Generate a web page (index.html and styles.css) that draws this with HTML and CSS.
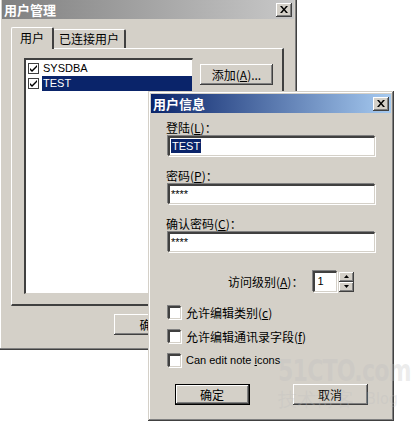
FILE: index.html
```html
<!DOCTYPE html>
<html>
<head>
<meta charset="UTF-8">
<link rel="stylesheet" href="styles.css">
</head>
<body>
<div class="desk">

  <div class="win back">
    <div class="title inactive">
      <span class="cap">用户管理</span>
      <span class="xbtn"><svg width="8" height="7" viewBox="0 0 8 7"><path d="M0 0h2l2 2.5 2-2.5h2l-3 3.5 3 3.5h-2l-2-2.5-2 2.5h-2l3-3.5z" fill="#000"/></svg></span>
    </div>
    <div class="tabs">
      <span class="tab on">用户</span>
      <span class="tab">已连接用户</span>
    </div>
    <div class="panel">
      <div class="list">
        <div class="item">
          <span class="chk"><svg width="9" height="9" viewBox="0 0 9 9"><path d="M1 4l2 2 5-5v2l-5 5-2-2z" fill="#000"/></svg></span>
          <span class="txt">SYSDBA</span>
        </div>
        <div class="item">
          <span class="chk"><svg width="9" height="9" viewBox="0 0 9 9"><path d="M1 4l2 2 5-5v2l-5 5-2-2z" fill="#000"/></svg></span>
          <span class="txt sel">TEST</span>
        </div>
      </div>
      <button class="btn add">添加(<u>A</u>)...</button>
    </div>
    <div class="foot">
      <button class="btn">确定</button>
    </div>
  </div>

  <div class="win front">
    <div class="title active">
      <span class="cap">用户信息</span>
      <span class="xbtn"><svg width="8" height="7" viewBox="0 0 8 7"><path d="M0 0h2l2 2.5 2-2.5h2l-3 3.5 3 3.5h-2l-2-2.5-2 2.5h-2l3-3.5z" fill="#000"/></svg></span>
    </div>
    <div class="body">
      <label class="lbl">登陆(<u>L</u>)：</label>
      <div class="field"><span class="sel">TEST</span></div>

      <label class="lbl">密码(<u>P</u>)：</label>
      <div class="field">****</div>

      <label class="lbl">确认密码(<u>C</u>)：</label>
      <div class="field">****</div>

      <div class="level">
        <span>访问级别(<u>A</u>)：</span>
        <div class="spin">1</div>
        <div class="arrows">
          <span class="arr"><svg width="5" height="3" viewBox="0 0 5 3"><path d="M2.5 0L5 3H0z" fill="#000"/></svg></span>
          <span class="arr"><svg width="5" height="3" viewBox="0 0 5 3"><path d="M0 0h5L2.5 3z" fill="#000"/></svg></span>
        </div>
      </div>

      <div class="opts">
        <div class="opt"><span class="box"></span><span>允许编辑类别(<u>c</u>)</span></div>
        <div class="opt"><span class="box"></span><span>允许编辑通讯录字段(<u>f</u>)</span></div>
        <div class="opt"><span class="box"></span><span class="lat">Can edit note <u>i</u>cons</span></div>
      </div>

      <div class="btns">
        <button class="btn def">确定</button>
        <button class="btn">取消</button>
      </div>
    </div>
  </div>

  <div class="mark">
    <div class="mark-big">51CTO.com</div>
    <div class="mark-small"><span>技术博客</span><span class="blog">Blog</span></div>
  </div>
</div>
</body>
</html>
```

FILE: styles.css
```css
html, body {
    margin: 0;
    padding: 0;
    background: #fff;
}

body {
    font-family: "Noto Sans CJK SC", "Liberation Sans", sans-serif;
    font-size: 12px;
    color: #000;
}

.desk {
    position: relative;
    width: 414px;
    height: 428px;
    overflow: hidden;
}

/* windows */
.win {
    position: absolute;
    box-sizing: border-box;
    background: #d4d0c8;
    padding: 3px;
    box-shadow: inset -1px -1px #404040, inset 1px 1px #d4d0c8,
                inset -2px -2px #808080, inset 2px 2px #fff;
    display: flex;
    flex-direction: column;
}

.back {
    left: -1px;
    top: -3px;
    width: 298px;
    height: 353px;
}

.front {
    left: 148px;
    top: 91px;
    width: 246px;
    height: 330px;
}

.title {
    height: 19px;
    flex-shrink: 0;
    display: flex;
    align-items: center;
    justify-content: space-between;
    padding: 0 2px 0 2px;
    color: #fff;
    font-weight: bold;
    font-size: 13px;
}

.title.inactive {
    background: linear-gradient(to right, #808080, #c8c8c8);
}

.title.active {
    background: linear-gradient(to right, #0a246a, #a6caf0);
}

.xbtn {
    width: 16px;
    height: 14px;
    background: #d4d0c8;
    box-sizing: border-box;
    display: flex;
    align-items: center;
    justify-content: center;
    box-shadow: inset -1px -1px #404040, inset 1px 1px #fff,
                inset -2px -2px #808080;
}

/* tabs */
.tabs {
    display: flex;
    align-items: flex-end;
    margin: 7px 0 0 9px;
    height: 22px;
}

.tab {
    height: 18px;
    line-height: 18px;
    padding: 0 5px;
    border-top: 1px solid #fff;
    border-left: 1px solid #fff;
    border-right: 2px solid #404040;
    border-radius: 2px 2px 0 0;
    font-size: 12px;
}

.tab.on {
    height: 21px;
    line-height: 20px;
    padding: 0 8px;
    margin-right: -1px;
    position: relative;
    z-index: 1;
    background: #d4d0c8;
    margin-bottom: -1px;
}

.panel {
    margin: 0 10px 0 9px;
    height: 258px;
    box-sizing: border-box;
    border-top: 1px solid #fff;
    border-left: 1px solid #fff;
    border-right: 2px solid #404040;
    border-bottom: 2px solid #404040;
    display: flex;
    align-items: flex-start;
    padding: 9px 0 0 12px;
}

.list {
    width: 169px;
    height: 236px;
    box-sizing: border-box;
    background: #fff;
    border-top: 2px solid #404040;
    border-left: 2px solid #404040;
    border-right: 1px solid #d4d0c8;
    border-bottom: 1px solid #d4d0c8;
    padding: 1px 0 0 1px;
}

.item {
    display: flex;
    align-items: center;
    height: 15px;
    font-family: "Liberation Sans", sans-serif;
    font-size: 11px;
}

.chk {
    width: 11px;
    height: 11px;
    box-sizing: border-box;
    border: 1px solid #404040;
    display: flex;
    align-items: center;
    justify-content: center;
    margin: 0 3px 0 1px;
    background: #fff;
}

.txt {
    flex: 1;
    line-height: 15px;
    padding-left: 1px;
}

.sel {
    background: #0a246a;
    color: #fff;
}

.btn {
    width: 75px;
    height: 21px;
    padding: 0;
    border: none;
    background: #d4d0c8;
    font-family: "Noto Sans CJK SC", "Liberation Sans", sans-serif;
    font-size: 12px;
    color: #000;
    box-shadow: inset -1px -1px #404040, inset 1px 1px #fff,
                inset -2px -2px #808080;
}

.btn.add {
    width: 73px;
    margin: 6px 0 0 7px;
}

.btn.def {
    box-shadow: inset 0 0 0 1px #000, inset -2px -2px #404040,
                inset 2px 2px #fff, inset -3px -3px #808080;
}

.foot {
    padding: 8px 0 0 112px;
}

/* front dialog body */
.body {
    padding: 7px 15px 0 15px;
    display: flex;
    flex-direction: column;
}

.lbl {
    height: 16px;
    line-height: 16px;
    margin-bottom: 0;
}

.field {
    height: 20px;
    box-sizing: border-box;
    background: #fff;
    border-top: 2px solid #404040;
    border-left: 2px solid #404040;
    border-right: 1px solid #d4d0c8;
    border-bottom: 1px solid #d4d0c8;
    box-shadow: -1px -1px #808080, 1px 1px #fff;
    margin: 0 1px 12px 2px;
    padding-left: 1px;
    font-family: "Liberation Sans", sans-serif;
    font-size: 11px;
    line-height: 17px;
}

.field .sel {
    padding: 1px 1px;
}

.level {
    display: flex;
    align-items: center;
    margin: 7px 0 0 62px;
    height: 21px;
}

.spin {
    width: 24px;
    height: 21px;
    box-sizing: border-box;
    margin-left: 10px;
    background: #fff;
    border-top: 2px solid #404040;
    border-left: 2px solid #404040;
    border-right: 1px solid #d4d0c8;
    border-bottom: 1px solid #d4d0c8;
    box-shadow: -1px -1px #808080, 1px 1px #fff;
    padding-left: 2px;
    font-family: "Liberation Sans", sans-serif;
    font-size: 11px;
    line-height: 17px;
}

.arrows {
    display: flex;
    flex-direction: column;
    margin-left: 2px;
}

.arr {
    width: 15px;
    height: 10px;
    box-sizing: border-box;
    background: #d4d0c8;
    display: flex;
    align-items: center;
    justify-content: center;
    box-shadow: inset -1px -1px #404040, inset 1px 1px #fff,
                inset -2px -2px #808080;
}

.opts {
    margin-top: 8px;
}

.opt {
    display: flex;
    align-items: center;
    height: 24px;
    margin-left: 2px;
}

.box {
    width: 13px;
    height: 13px;
    box-sizing: border-box;
    background: #fff;
    border-top: 2px solid #404040;
    border-left: 2px solid #404040;
    border-right: 1px solid #d4d0c8;
    border-bottom: 1px solid #d4d0c8;
    box-shadow: -1px -1px #808080, 1px 1px #fff;
    margin-right: 5px;
}

.lat {
    font-family: "Liberation Sans", sans-serif;
    font-size: 11px;
}

.btns {
    display: flex;
    justify-content: center;
    gap: 43px;
    margin-top: 12px;
}

/* watermark */
.mark {
    position: absolute;
    left: 278px;
    top: 354px;
    color: rgba(190, 190, 190, 0.3);
    font-family: "DejaVu Sans Condensed", "Liberation Sans Narrow", sans-serif;
    pointer-events: none;
}

.mark-big {
    font-size: 30px;
    font-weight: bold;
    letter-spacing: -1px;
    line-height: 34px;
    transform: scaleX(0.82);
    transform-origin: left;
}

.mark-small {
    font-size: 19px;
    line-height: 22px;
    display: flex;
    gap: 12px;
}

.mark-small .blog {
    font-size: 16px;
}
```
